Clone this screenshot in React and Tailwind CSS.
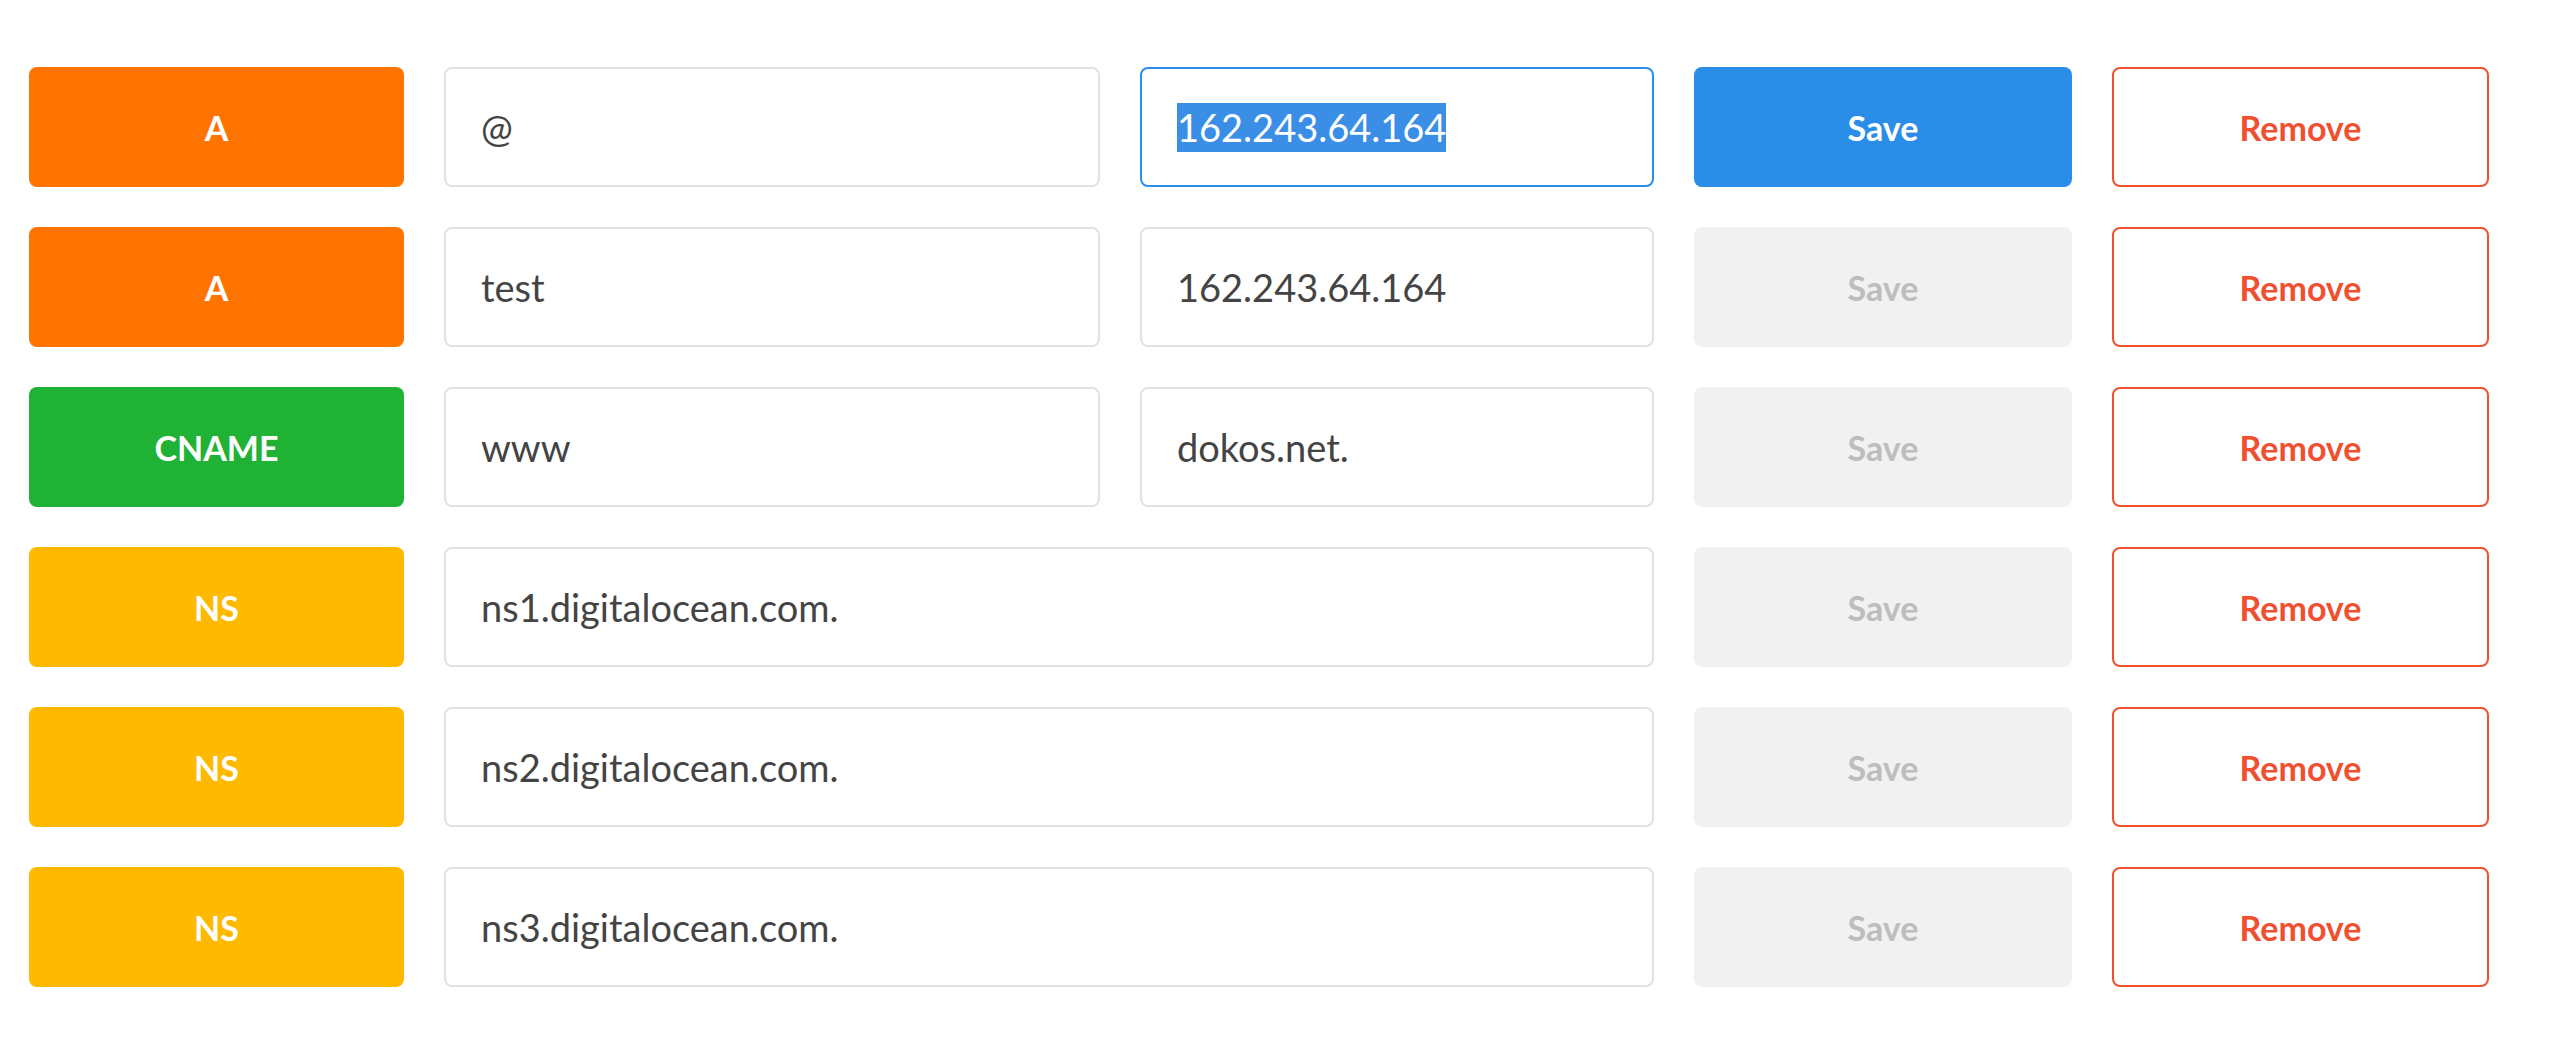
import React from 'react'

const typeColors = {
  A: 'bg-[#ff7400]',
  CNAME: 'bg-[#20b234]',
  NS: 'bg-[#ffb900]',
}

const records = [
  { type: 'A', name: '@', value: '162.243.64.164', active: true },
  { type: 'A', name: 'test', value: '162.243.64.164' },
  { type: 'CNAME', name: 'www', value: 'dokos.net.' },
  { type: 'NS', value: 'ns1.digitalocean.com.' },
  { type: 'NS', value: 'ns2.digitalocean.com.' },
  { type: 'NS', value: 'ns3.digitalocean.com.' },
]

const font = { fontFamily: 'Lato, "Open Sans", sans-serif' }

function Field({ className = '', focused, selected, children }) {
  return (
    <div
      className={`h-[120px] flex items-center rounded-lg border-2 bg-white pl-[35px] pr-4 text-[38px] text-[#444] ${
        focused ? 'border-[#2b8fe8]' : 'border-[#e1e1e1]'
      } ${className}`}
    >
      {selected ? <span className="bg-[#3a8ee6] text-white leading-[49px]">{children}</span> : children}
    </div>
  )
}

function Row({ rec }) {
  return (
    <div className="flex gap-10">
      {/* record type */}
      <div className={`w-[375px] h-[120px] rounded-lg flex items-center justify-center text-white text-[34px] font-bold ${typeColors[rec.type]}`}>
        {rec.type}
      </div>

      {rec.name != null ? (
        <>
          <Field className="w-[656px]">{rec.name}</Field>
          <Field className="w-[514px]" focused={rec.active} selected={rec.active}>{rec.value}</Field>
        </>
      ) : (
        <Field className="w-[1210px]">{rec.value}</Field>
      )}

      <div
        className={`w-[378px] h-[120px] rounded-lg flex items-center justify-center text-[34px] font-bold ${
          rec.active ? 'bg-[#2a8ee8] text-white' : 'bg-[#f1f1f1] text-[#bdbdbd]'
        }`}
      >
        Save
      </div>
      <div className="w-[377px] h-[120px] rounded-lg border-2 border-[#f0502f] bg-white flex items-center justify-center text-[34px] font-bold text-[#f0502f]">
        Remove
      </div>
    </div>
  )
}

export default function App() {
  return (
    <div className="min-h-[1040px] bg-white pt-[67px] pl-[29px]" style={font}>
      <div className="flex flex-col gap-10">
        {records.map((r, i) => (
          <Row key={i} rec={r} />
        ))}
      </div>
    </div>
  )
}
